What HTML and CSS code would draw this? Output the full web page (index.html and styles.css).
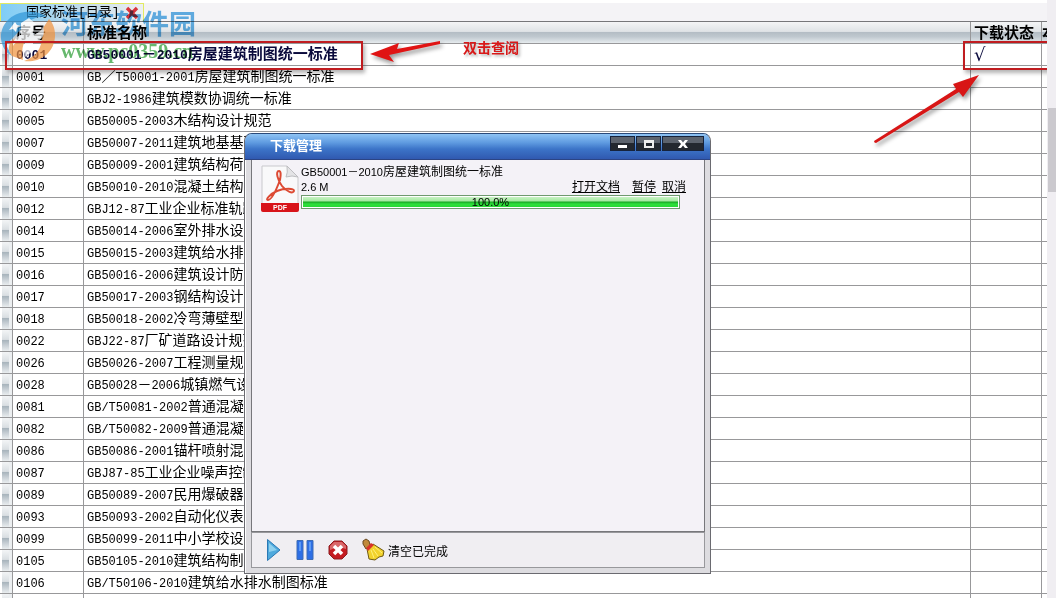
FILE: index.html
```html
<!DOCTYPE html>
<html lang="zh-CN">

<head>
    <meta charset="UTF-8">
    <meta name="viewport" content="width=device-width, initial-scale=1.0">
    <title>国家标准[目录]</title>
    <link rel="stylesheet" href="styles.css">
</head>

<body>

    <div class="page">
        <div class="main">
            <div class="tabs">
                <div class="tab">
                    <span>国家标准[目录]</span>
                    <button class="tab-close" aria-label="关闭">
                        <svg width="14" height="14" viewBox="0 0 14 14"><path d="M2 2L12 12M12 2L2 12" stroke="#d8343c" stroke-width="3.4"/></svg>
                    </button>
                </div>
            </div>

            <table class="list">
                <colgroup>
                    <col class="col-mark">
                    <col class="col-no">
                    <col>
                    <col class="col-state">
                    <col class="col-more">
                </colgroup>
                <thead>
                    <tr><th></th><th>序号</th><th>标准名称</th><th>下载状态</th><th>本</th></tr>
                </thead>
                <tbody>
                    <tr class="current"><td></td><td><span class="code">0001</span></td><td><span class="code">GB50001</span>－<span class="code">2010</span>房屋建筑制图统一标准</td><td class="done">√</td><td></td></tr>
                    <tr><td></td><td><span class="code">0001</span></td><td><span class="code">GB</span>／<span class="code">T50001-2001</span>房屋建筑制图统一标准</td><td></td><td></td></tr>
                    <tr><td></td><td><span class="code">0002</span></td><td><span class="code">GBJ2-1986</span>建筑模数协调统一标准</td><td></td><td></td></tr>
                    <tr><td></td><td><span class="code">0005</span></td><td><span class="code">GB50005-2003</span>木结构设计规范</td><td></td><td></td></tr>
                    <tr><td></td><td><span class="code">0007</span></td><td><span class="code">GB50007-2011</span>建筑地基基础</td><td></td><td></td></tr>
                    <tr><td></td><td><span class="code">0009</span></td><td><span class="code">GB50009-2001</span>建筑结构荷载</td><td></td><td></td></tr>
                    <tr><td></td><td><span class="code">0010</span></td><td><span class="code">GB50010-2010</span>混凝土结构设</td><td></td><td></td></tr>
                    <tr><td></td><td><span class="code">0012</span></td><td><span class="code">GBJ12-87</span>工业企业标准轨距</td><td></td><td></td></tr>
                    <tr><td></td><td><span class="code">0014</span></td><td><span class="code">GB50014-2006</span>室外排水设计</td><td></td><td></td></tr>
                    <tr><td></td><td><span class="code">0015</span></td><td><span class="code">GB50015-2003</span>建筑给水排水</td><td></td><td></td></tr>
                    <tr><td></td><td><span class="code">0016</span></td><td><span class="code">GB50016-2006</span>建筑设计防火</td><td></td><td></td></tr>
                    <tr><td></td><td><span class="code">0017</span></td><td><span class="code">GB50017-2003</span>钢结构设计规</td><td></td><td></td></tr>
                    <tr><td></td><td><span class="code">0018</span></td><td><span class="code">GB50018-2002</span>冷弯薄壁型钢</td><td></td><td></td></tr>
                    <tr><td></td><td><span class="code">0022</span></td><td><span class="code">GBJ22-87</span>厂矿道路设计规范</td><td></td><td></td></tr>
                    <tr><td></td><td><span class="code">0026</span></td><td><span class="code">GB50026-2007</span>工程测量规范</td><td></td><td></td></tr>
                    <tr><td></td><td><span class="code">0028</span></td><td><span class="code">GB50028</span>－<span class="code">2006</span>城镇燃气设</td><td></td><td></td></tr>
                    <tr><td></td><td><span class="code">0081</span></td><td><span class="code">GB/T50081-2002</span>普通混凝土</td><td></td><td></td></tr>
                    <tr><td></td><td><span class="code">0082</span></td><td><span class="code">GB/T50082-2009</span>普通混凝土</td><td></td><td></td></tr>
                    <tr><td></td><td><span class="code">0086</span></td><td><span class="code">GB50086-2001</span>锚杆喷射混凝</td><td></td><td></td></tr>
                    <tr><td></td><td><span class="code">0087</span></td><td><span class="code">GBJ87-85</span>工业企业噪声控制</td><td></td><td></td></tr>
                    <tr><td></td><td><span class="code">0089</span></td><td><span class="code">GB50089-2007</span>民用爆破器材</td><td></td><td></td></tr>
                    <tr><td></td><td><span class="code">0093</span></td><td><span class="code">GB50093-2002</span>自动化仪表工</td><td></td><td></td></tr>
                    <tr><td></td><td><span class="code">0099</span></td><td><span class="code">GB50099-2011</span>中小学校设计</td><td></td><td></td></tr>
                    <tr><td></td><td><span class="code">0105</span></td><td><span class="code">GB50105-2010</span>建筑结构制图</td><td></td><td></td></tr>
                    <tr><td></td><td><span class="code">0106</span></td><td><span class="code">GB/T50106-2010</span>建筑给水排水制图标准</td><td></td><td></td></tr>
                    <tr><td></td><td></td><td></td><td></td><td></td></tr>
                </tbody>
            </table>

            <div class="box box-state"></div>
        </div>
        <div class="scrollbar"><div class="thumb"></div></div>
    </div>

    <!-- 下载管理窗口 -->
    <div class="dialog">
        <div class="titlebar">
            <span class="title">下载管理</span>
            <div class="winbuttons">
                <button aria-label="最小化"><svg width="12" height="10" viewBox="0 0 12 10"><path d="M1 6h9v3H1z" fill="#fff"/></svg></button>
                <button aria-label="最大化"><svg width="12" height="10" viewBox="0 0 12 10"><path d="M1 1h10v8H1zM3 4v3h6V4z" fill="#eee" fill-rule="evenodd"/></svg></button>
                <button class="wide" aria-label="关闭"><svg width="12" height="10" viewBox="0 0 12 10"><path d="M1 1h3l2 2.500L8 1h3L8 5l3 4H8L6 6.500 4 9H1l3-4z" fill="#fff"/></svg></button>
            </div>
        </div>
        <div class="frame">
            <div class="downloads">
                <div class="item">
                    <svg class="pdf" width="40" height="48" viewBox="0 0 40 48">
                        <path d="M2 1h25l11 11v34H2z" fill="#f9f9fa" stroke="#c9c9cc"/>
                        <path d="M27 1q1 7-1 11 6-2 12 0z" fill="#e4e4e6" stroke="#bdbdc0"/>
                        <path d="M1 38h38v7q0 2-2 2H3q-2 0-2-2z" fill="#d8141a"/>
                        <path d="M19 6c-4 0-1 10 3 15 5 6 11 8 12 5s-10-3-17 0C10 29 5 35 8 35c4 0 9-12 12-20 1-5 1-9-1-9z" fill="none" stroke="#dd4a33" stroke-width="2"/>
                        <text x="20" y="45" class="pdf-text" text-anchor="middle">PDF</text>
                    </svg>
                    <div class="info">
                        <div class="name"><span class="latin">GB50001－2010</span>房屋建筑制图统一标准</div>
                        <div class="row">
                            <span class="latin">2.6 M</span>
                            <span class="links"><a href="#" class="open">打开文档</a><a href="#">暂停</a><a href="#">取消</a></span>
                        </div>
                        <div class="progress" role="progressbar" aria-label="下载进度" aria-valuenow="100" aria-valuemin="0" aria-valuemax="100">
                            <div class="bar" style="width: 100%">100.0%</div>
                        </div>
                    </div>
                </div>
            </div>
            <div class="toolbar">
                <button aria-label="开始">
                    <svg width="16" height="24" viewBox="0 0 16 24"><path d="M1.500 1.500L14 12 1.500 22.500z" fill="#4fa9dc" stroke="#2a78b4"/><path d="M3 5l8 7-8 2z" fill="#8fd0ee"/></svg>
                </button>
                <button aria-label="暂停">
                    <svg width="18" height="22" viewBox="0 0 18 22"><path d="M1 1.500h6v19H1zM11 1.500h6v19h-6z" fill="#2d6fe6" stroke="#3d6cb4"/><path d="M3 3h2v9H3zM13 3h2v9h-2z" fill="#5c9af4"/></svg>
                </button>
                <button aria-label="删除">
                    <svg width="20" height="20" viewBox="0 0 20 20"><path d="M6 1h8l5 5v8l-5 5H6l-5-5V6z" fill="#c41c22" stroke="#8c1c20"/><path d="M6 2h8l4 4v3Q10 6 2 10V6z" fill="#d9686a"/><path d="M6 6l8 8M14 6l-8 8" stroke="#fff" stroke-width="3.500"/></svg>
                </button>
                <button class="clear">
                    <svg width="24" height="24" viewBox="0 0 24 24"><path d="M1 3l3-2 3 2 1 4-4 4-3-5z" fill="#c08a3c" stroke="#6b4a20"/><path d="M5 11l6-5 11 7-1 5-4 1-4 3-6-1z" fill="#f2d22c" stroke="#6e5a14"/><path d="M9 12l3 8M11 11l5 7M13 9l7 6" stroke="#fff07a"/><path d="M4 10l5-5 3 2-6 6z" fill="#d8342a"/></svg>
                    <span>清空已完成</span>
                </button>
            </div>
        </div>
    </div>

    <!-- 水印 -->
    <div class="watermark">
        <svg class="logo" width="58" height="56" viewBox="0 0 58 56">
            <path d="M1 30C0 12 16 1 33 3c5 0 10 2 14 5-9-1-17 2-22 8L6 36l6 11C5 43 2 37 1 30z" fill="#2f96d8"/>
            <path d="M49 10c9 9 8 27-3 36-7 6-16 7-22 6 12-4 18-13 18-25l-5 1z" fill="#f0923c"/>
            <path d="M12 47C6 40 9 31 18 28l14-3c-9 6-11 14-9 26z" fill="#f0923c"/>
            <path d="M13 37q-1-8 8-11V14l8-5 8 7-4 1v9q9-3 10-9 4 14-10 16v9l-8 6V34q-9-3-12 3z" fill="#fff"/>
            <path d="M15 13l2 3 4 1-4 2-1 4-3-3-4 1 3-4z" fill="#fff"/>
        </svg>
        <div class="brand">
            <div class="brand-name">河东软件园</div>
            <div class="brand-url">www.pc0359.cn</div>
        </div>
    </div>

    <!-- 标注 -->
    <div class="box box-row"></div>
    <svg class="arrow arrow-row" width="80" height="32" viewBox="0 0 80 32"><path d="M72 5L29 13l2-6L2 18l24 8-5-7 51-11z" fill="#e01414"/></svg>
    <strong class="note">双击查阅</strong>
    <svg class="arrow arrow-state" width="112" height="76" viewBox="0 0 112 76"><path d="M2 68L84 16l-3-5 26-9-16 22-4-5L4 70q-2 0-2-2z" fill="#d81616"/></svg>

</body>

</html>
```
FILE: styles.css
```css
* {
    box-sizing: border-box;
}

body {
    margin: 0;
    height: 100vh;
    overflow: hidden;
    position: relative;
    background-color: #fff;
    color: #000;
    font-family: "Liberation Sans", "Noto Sans CJK SC", sans-serif;
    font-size: 14px;
}

button {
    display: flex;
    align-items: center;
    justify-content: center;
    border: 0;
    padding: 0;
    background: none;
    color: inherit;
    font: inherit;
}

.page {
    display: flex;
    height: 100%;
}

.main {
    position: relative;
    flex: 1;
    min-width: 0;
    overflow: hidden;
}

.scrollbar {
    width: 9px;
    padding: 108px 0 0 1px;
    background-color: #f0eef2;
}

.thumb {
    height: 84px;
    background-color: #cbc9ce;
}

/* 标签栏 */
.tabs {
    height: 22px;
    padding-top: 3px;
    background: linear-gradient(#fff 3px, #f4f3f6 3px);
    border-bottom: 1px solid #77777a;
}

.tab {
    display: flex;
    align-items: center;
    gap: 5px;
    width: 144px;
    height: 18px;
    padding-left: 25px;
    border: 1px solid #e2ea62;
    border-bottom: 0;
    background: linear-gradient(90deg, #7fcdf6, #c4ddea 60%, #edf0f2);
    font-family: "Liberation Mono", "Noto Sans CJK SC", monospace;
    font-size: 13px;
    line-height: 16px;
    white-space: nowrap;
}

/* 标准列表 */
.list {
    width: 100%;
    table-layout: fixed;
    border-collapse: separate;
    border-spacing: 0;
}

.col-mark {
    width: 13px;
}

.col-no,
.col-state {
    width: 71px;
}

.col-more {
    width: 5px;
}

.list th,
.list td {
    height: 22px;
    padding: 0 0 0 3px;
    border-right: 1px solid #98989a;
    border-bottom: 1px solid #98989a;
    line-height: 18px;
    text-align: left;
    white-space: nowrap;
    overflow: hidden;
}

.list th {
    background: linear-gradient(#f4f5f6, #dfe3e6 45%, #b4bdc5 50%, #bfc8cf 70%, #e6ebee);
    font-size: 15px;
}

.list tr > :last-child {
    padding: 0;
    border-right: 0;
}

.list td:first-child {
    background: linear-gradient(90deg, #fff 2px, transparent 2px 4px, transparent 9px, #eceff1 9px),
        linear-gradient(#f3f5f6, #d9dee2 45%, #a9b5bd 50%, #c4ccd2 70%, #e9edef);
}

.code {
    font-family: "Liberation Mono", monospace;
    font-size: 12px;
}

.current {
    color: #0a0a3c;
    font-size: 15px;
    font-weight: bold;
}

.current .code {
    font-size: 13px;
}

.current .done {
    font-family: "DejaVu Sans", sans-serif;
    font-size: 18px;
    font-weight: normal;
}

/* 下载管理窗口 */
.dialog {
    position: absolute;
    left: 244px;
    top: 133px;
    width: 467px;
    border-radius: 8px 8px 0 0;
    border: 1px solid #6a6a70;
    border-top-color: #2a4a7a;
    background-color: #dddce0;
    font-size: 12px;
    overflow: hidden;
}

.titlebar {
    display: flex;
    justify-content: space-between;
    height: 26px;
    padding: 2px 6px 0 25px;
    background: linear-gradient(#8fc4f4, #5e9ae0 35%, #3c74c8 60%, #3059b0);
    border-bottom: 1px solid #2c4484;
}

.title {
    color: #fff;
    font-size: 13px;
    font-weight: bold;
    line-height: 20px;
}

.winbuttons {
    display: flex;
    gap: 1px;
}

.winbuttons button {
    width: 25px;
    height: 15px;
    border: 1px solid #16233c;
    background: linear-gradient(#5c636d 50%, #23282f 50%);
}

.winbuttons .wide {
    width: 42px;
}

.frame {
    padding: 0 5px 5px;
    border-left: 1px solid #fff;
}

.downloads {
    height: 372px;
    padding: 5px 24px 0 8px;
    border: 1px solid #77777b;
    border-top: 0;
    background-color: #f4f2f7;
}

.item {
    display: flex;
    gap: 1px;
}

.info {
    flex: 1;
}

.name,
.row {
    height: 15px;
    line-height: 15px;
}

.row {
    display: flex;
    justify-content: space-between;
}

.latin {
    font-size: 11px;
}

.links {
    display: flex;
    gap: 6px;
    margin-right: -6px;
}

.links a {
    color: #000;
    text-underline-offset: 1px;
}

.links .open {
    margin-right: 6px;
}

.progress {
    height: 14px;
    border: 1px solid #6f9a6f;
    background-color: #fff;
    padding: 1px;
}

.bar {
    height: 10px;
    background: linear-gradient(#c8f2c4, #a4eaa0 40%, #18a824 50%, #2ee03c 70%, #28d834);
    font-size: 11px;
    line-height: 10px;
    text-align: center;
}

.pdf-text {
    fill: #fff;
    font-size: 7px;
    font-weight: bold;
}

.toolbar {
    display: flex;
    align-items: center;
    gap: 14px;
    height: 36px;
    padding-left: 14px;
    border: 1px solid #98989c;
    background-color: #f0eef2;
}

.clear {
    gap: 2px;
}

/* 水印 */
.watermark {
    position: absolute;
    left: 0;
    top: 9px;
    display: flex;
    gap: 3px;
    pointer-events: none;
}

.logo {
    opacity: 0.7;
}

.brand {
    mix-blend-mode: multiply;
    opacity: 0.8;
}

.brand-name {
    color: #3c9fe0;
    font-size: 27px;
    font-weight: bold;
    line-height: 32px;
}

.brand-url {
    color: #3fa648;
    font-family: "Liberation Serif", serif;
    font-size: 20px;
    font-weight: bold;
    line-height: 20px;
}

/* 标注 */
.box {
    position: absolute;
    height: 29px;
    border: 2px solid #c01c20;
    box-shadow: 2px 3px 4px rgba(0, 0, 0, 0.3);
}

.box-row {
    left: 5px;
    top: 41px;
    width: 358px;
}

.box-state {
    right: -2px;
    top: 41px;
    width: 86px;
}

.arrow {
    position: absolute;
    filter: drop-shadow(2px 3px 2px rgba(0, 0, 0, 0.4));
}

.arrow-row {
    left: 368px;
    top: 36px;
}

.arrow-state {
    right: 72px;
    top: 73px;
}

.note {
    position: absolute;
    left: 463px;
    top: 37px;
    color: #d81818;
    font-size: 14px;
    text-shadow: 2px 2px 3px rgba(0, 0, 0, 0.3);
}
```
